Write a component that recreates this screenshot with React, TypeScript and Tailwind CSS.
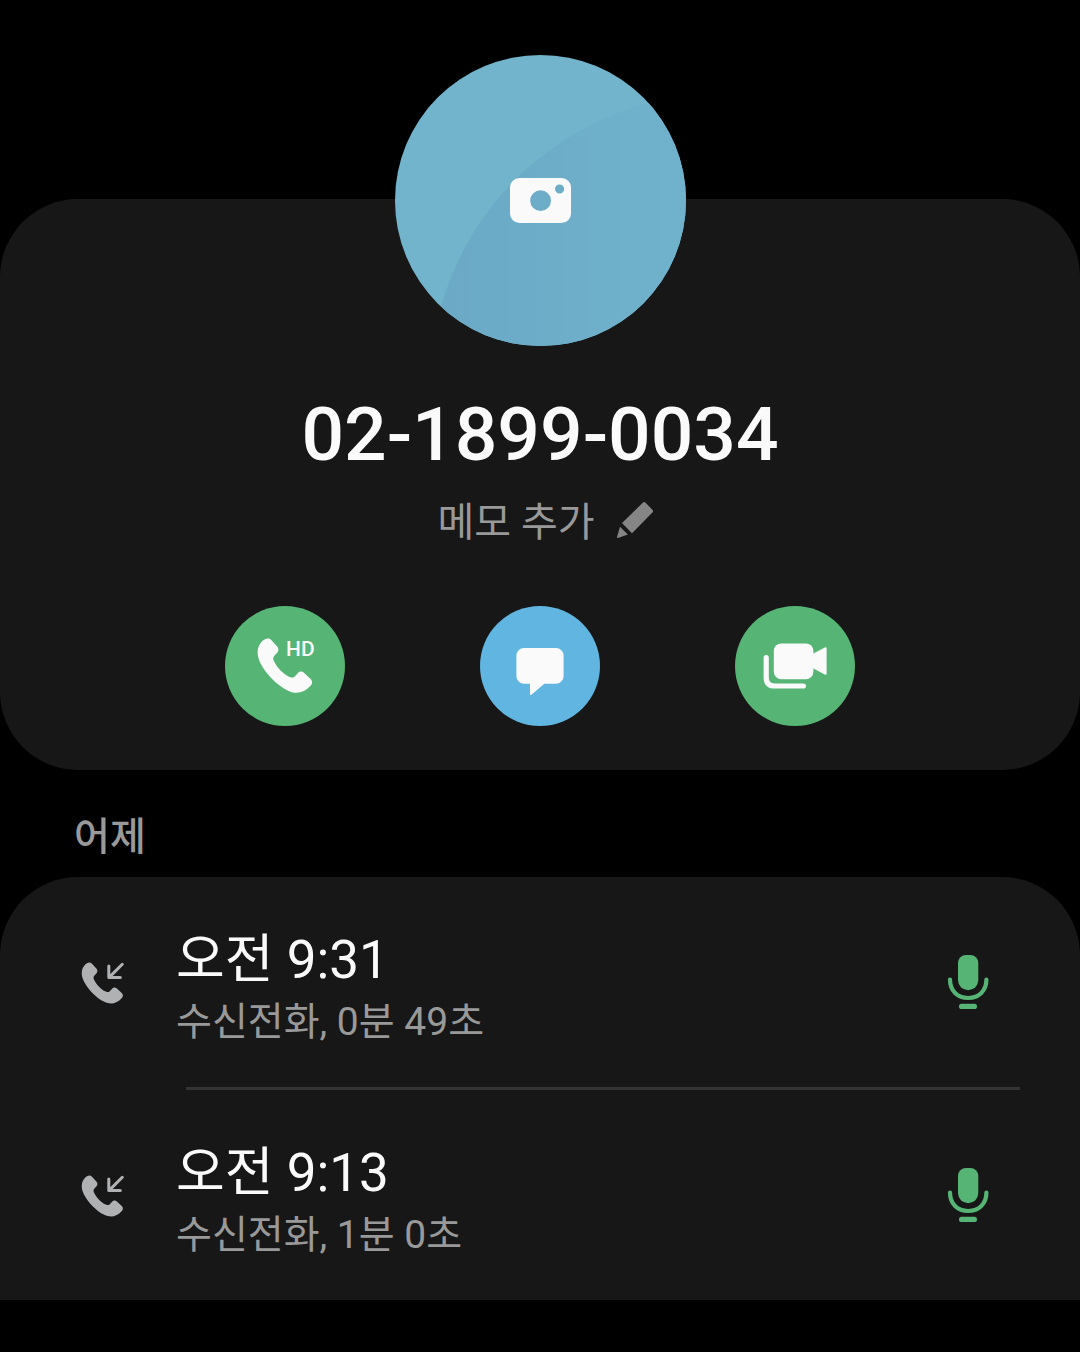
import React from 'react';

interface CallRecord {
    id: number;
    time: string;
    detail: string;
}

const calls: CallRecord[] = [
    { id: 1, time: '오전 9:31', detail: '수신전화, 0분 49초' },
    { id: 2, time: '오전 9:13', detail: '수신전화, 1분 0초' },
];

const HANDSET =
    'M36.5 36C39.5 32.5 43.8 31.4 46.2 34L52 40.3C54 42.6 53.8 45 52 47L49.8 49.2C48 51 47.8 53 49 55.2C52 61.5 58 67.5 63.5 70.6C65.8 71.9 68 72 69.8 70.4L72.5 67.4C74.5 65.2 77 65 79.2 66.9L85.6 73C87.8 75.2 87.6 77.6 85.8 79.5C79 87 71 88.8 62.5 84.5C52 79.2 41 68 35.6 57.5C31.3 49 31.8 41.2 36.5 36Z';

const AvatarBackground: React.FC = () => (
    <svg viewBox="0 0 291 291" className="absolute inset-0 w-full h-full" aria-hidden="true">
        <defs>
            <linearGradient id="shade" gradientUnits="userSpaceOnUse" x1="46" y1="0" x2="291" y2="0">
                <stop offset="0" stopColor="#6ba9c6" />
                <stop offset="1" stopColor="#70b2cb" />
            </linearGradient>
        </defs>
        <rect width="291" height="291" fill="#71b4cc" />
        <circle cx="327" cy="331" r="292" fill="url(#shade)" />
    </svg>
);

const CameraIcon: React.FC = () => (
    <svg viewBox="0 0 61 45" className="relative w-[61px] h-[45px]" aria-hidden="true">
        <path
            fill="#fafafa"
            fillRule="evenodd"
            d="M9.5 0H51.5A9.5 9.5 0 0 1 61 9.5V35.5A9.5 9.5 0 0 1 51.5 45H9.5A9.5 9.5 0 0 1 0 35.5V9.5A9.5 9.5 0 0 1 9.5 0ZM20.2 22.7a10.4 10.4 0 1 0 20.8 0a10.4 10.4 0 1 0 -20.8 0ZM45 11a4.6 4.6 0 1 0 9.2 0a4.6 4.6 0 1 0 -9.2 0Z"
        />
    </svg>
);

const PencilIcon: React.FC = () => (
    <svg viewBox="0 0 40 40" className="w-10 h-10" fill="#858585" aria-hidden="true">
        <path d="M27.8 2.8Q29.2 1.4 30.6 2.8L37.4 9.8Q38.8 11.2 37.4 12.6L17 33.3L7 23Z" />
        <path d="M5 26.7L12.8 34.4L3 37.9Q1.8 38.2 2 37Z" />
    </svg>
);

const HdCallIcon: React.FC = () => (
    <svg viewBox="0 0 120 120" className="w-full h-full" fill="#fafafa" aria-hidden="true">
        <path d={HANDSET} />
        <text x="61" y="50" className="text-[21px] font-medium">HD</text>
    </svg>
);

const MessageIcon: React.FC = () => (
    <svg viewBox="0 0 120 120" className="w-full h-full" fill="#fafafa" aria-hidden="true">
        <path d="M44 42H76A7.6 7.6 0 0 1 83.6 49.6V70.2A7.6 7.6 0 0 1 76 77.8H64.3L51.4 88.7Q50 89.6 50 88V77.8H44A7.6 7.6 0 0 1 36.4 70.2V49.6A7.6 7.6 0 0 1 44 42Z" />
    </svg>
);

const VideoIcon: React.FC = () => (
    <svg viewBox="0 0 120 120" className="w-full h-full" fill="#fafafa" aria-hidden="true">
        <rect x="38.8" y="37.4" width="39.6" height="35.8" rx="7.5" />
        <path d="M77 48.2L89.8 41.5Q91.6 40.8 91.6 42.6V67.6Q91.6 69.4 89.8 68.6L77 61.8Z" />
        <path
            d="M31.2 51.6V71.5Q31.2 80 39.7 80H68.4"
            fill="none"
            stroke="#fafafa"
            strokeWidth="5.2"
            strokeLinecap="round"
        />
    </svg>
);

const IncomingCallIcon: React.FC = () => (
    <svg viewBox="0 0 48 48" className="w-12 h-12 shrink-0" aria-hidden="true">
        <path d={HANDSET} fill="#b0b1b3" transform="translate(-22.9 -20) scale(0.755)" />
        <path
            d="M42.3 6.3L29.2 19.4M28.8 8V19.6H40.3"
            fill="none"
            stroke="#b0b1b3"
            strokeWidth="3"
            strokeLinecap="round"
            strokeLinejoin="round"
        />
    </svg>
);

const MicIcon: React.FC = () => (
    <svg viewBox="0 0 56 60" className="w-14 h-[60px]" fill="#56b475" aria-hidden="true">
        <path d="M26 3H30.3A8 8 0 0 1 38.3 11V28A10.15 10.15 0 0 1 18 28V11A8 8 0 0 1 26 3Z" />
        <path
            d="M10 27.6C10 39 17.5 46 28.2 46S46.4 39 46.4 27.6"
            fill="none"
            stroke="#56b475"
            strokeWidth="4.2"
            strokeLinecap="round"
        />
        <rect x="19" y="51.8" width="18" height="5.2" rx="2.6" />
    </svg>
);

const actionClass = 'w-[120px] h-[120px] rounded-full overflow-hidden';

const App: React.FC = () => {
    return (
        <div className="min-h-screen bg-black font-['Roboto','Noto_Sans_CJK_KR',sans-serif] text-[#fafafa]">
            <main className="pt-[199px]">
                <section className="flex flex-col items-center bg-[#171717] rounded-[78px] pb-11">
                    <button
                        aria-label="사진 추가"
                        className="relative flex items-center justify-center w-[291px] h-[291px] -mt-36 rounded-full overflow-hidden"
                    >
                        <AvatarBackground />
                        <CameraIcon />
                    </button>

                    <h1 className="mt-[42px] text-[75px] leading-[92px] font-medium">02-1899-0034</h1>

                    <button className="flex items-center gap-5 h-[60px] mt-[10px] pl-3 text-[40px] text-[#999999]">
                        <span className="pt-[6px]">메모 추가</span>
                        <PencilIcon />
                    </button>

                    <div className="flex justify-center gap-[135px] mt-14">
                        <button aria-label="HD 전화" className={`${actionClass} bg-[#56b475]`}>
                            <HdCallIcon />
                        </button>
                        <button aria-label="메시지" className={`${actionClass} bg-[#60b6e0]`}>
                            <MessageIcon />
                        </button>
                        <button aria-label="영상통화" className={`${actionClass} bg-[#56b475]`}>
                            <VideoIcon />
                        </button>
                    </div>
                </section>

                <h2 className="px-[74px] pt-[37px] pb-[10px] text-[39px] leading-[60px] font-medium text-[#999999]">어제</h2>

                <ul className="bg-[#171717] rounded-t-[78px]">
                    {calls.map((call, index) => (
                        <li key={call.id}>
                            {index > 0 && <hr className="ml-[186px] mr-[60px] border-t-3 border-[#333333]" />}
                            <div className="flex items-center h-[210px] pl-20 pr-[84px]">
                                <IncomingCallIcon />
                                <div className="flex-1 ml-12 pt-2">
                                    <p className="text-[53px] leading-[72px]">{call.time}</p>
                                    <p className="text-[39px] leading-[52px] text-[#999999]">{call.detail}</p>
                                </div>
                                <button aria-label="녹음 듣기">
                                    <MicIcon />
                                </button>
                            </div>
                        </li>
                    ))}
                </ul>
            </main>
        </div>
    );
};

export default App;
